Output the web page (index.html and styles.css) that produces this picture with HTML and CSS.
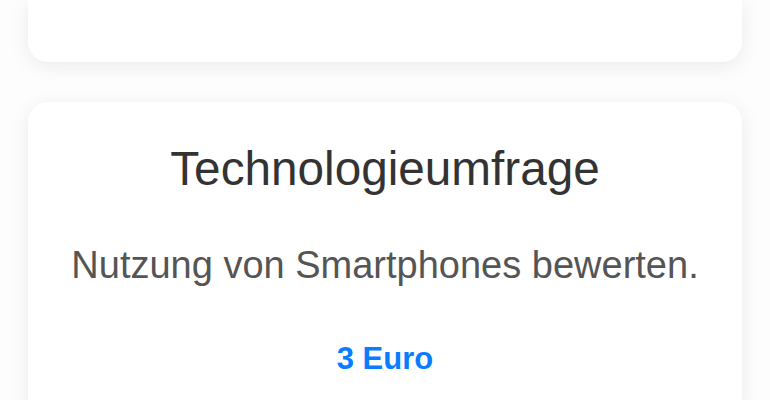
FILE: index.html
```html
<!DOCTYPE html>
<html lang="de">
<head>
<meta charset="utf-8">
<title>Umfragen</title>
<link rel="stylesheet" href="styles.css">
</head>
<body>
<main class="list">
  <section class="card card--clipped"></section>
  <section class="card">
    <h2 class="card-title">Technologieumfrage</h2>
    <p class="card-text">Nutzung von Smartphones bewerten.</p>
    <p class="card-price">3 Euro</p>
  </section>
</main>
</body>
</html>
```

FILE: styles.css
```css
html, body {
  margin: 0;
  padding: 0;
  background: #fdfdfd;
  font-family: "Liberation Sans", Arial, Helvetica, sans-serif;
}

.list {
  display: flex;
  flex-direction: column;
  gap: 40px;
  padding: 0 28px;
  height: 400px;
  overflow: hidden;
}

.card {
  background: #ffffff;
  border-radius: 20px;
  box-shadow: 0 4px 20px rgba(0, 0, 0, 0.08);
  padding: 40px 20px 40px;
  text-align: center;
  flex-shrink: 0;
}

.card--clipped {
  height: 62px;
  padding: 0;
  border-radius: 0 0 20px 20px;
}

.card-title {
  margin: 0;
  font-size: 47.7px;
  line-height: 54px;
  font-weight: 400;
  color: #333333;
}

.card-text {
  margin: 47px 0 0;
  font-size: 38px;
  line-height: 44px;
  color: #555555;
}

.card-price {
  margin: 54px 0 0;
  font-size: 31px;
  line-height: 36px;
  font-weight: 700;
  color: #0a7cff;
}
```
